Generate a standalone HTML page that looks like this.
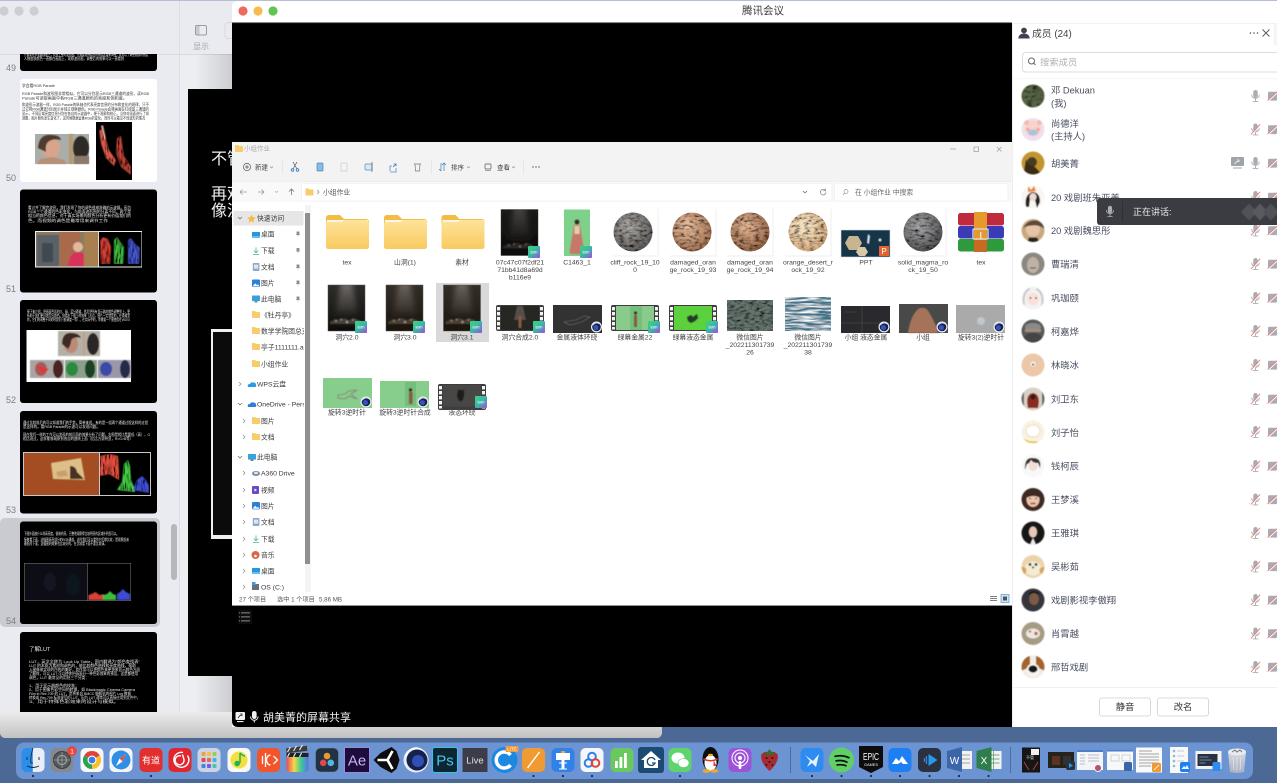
<!DOCTYPE html>
<html lang="zh"><head><meta charset="utf-8"><title>腾讯会议</title>
<style>
html,body{margin:0;padding:0;width:1277px;height:783px;overflow:hidden;background:#4b6994}
svg{display:block;position:absolute;left:0;top:0}
text{font-family:"Liberation Sans","Noto Sans CJK SC",sans-serif}
.l{text-anchor:middle;font-size:6.8px;fill:#444}
.s{font-size:6.8px;fill:#3a3a3a}
.n{font-size:9.3px;fill:#4a4e60}
.tb{font-size:6.5px;fill:#444}
.w{font-size:4px;fill:#e8e8e8}
.k{font-size:4px;fill:#333}
.c{font-size:9px;fill:#7b7d82}
</style></head><body>
<svg width="1277" height="783" viewBox="0 0 1277 783" xmlns="http://www.w3.org/2000/svg">
<defs>
<filter id="b" filterUnits="userSpaceOnUse" x="0" y="0" width="1277" height="783"><feGaussianBlur stdDeviation=".28"/></filter>
<filter id="b1" x="-20%" y="-20%" width="140%" height="140%"><feGaussianBlur stdDeviation="1.1"/></filter>
<filter id="b2" x="-20%" y="-20%" width="140%" height="140%"><feGaussianBlur stdDeviation=".6"/></filter>
<filter id="b3" x="-40%" y="-20%" width="180%" height="140%"><feGaussianBlur stdDeviation="2.6"/></filter>
<filter id="rock" x="0" y="0" width="1" height="1"><feTurbulence type="fractalNoise" baseFrequency=".2 .4" numOctaves="4" seed="4" result="n"/><feColorMatrix in="n" type="matrix" values="0 0 0 0 0 0 0 0 0 0 0 0 0 0 0 2.3 0 0 0 -.92" result="a"/><feComposite in="a" in2="SourceAlpha" operator="in" result="m"/><feMerge><feMergeNode in="SourceGraphic"/><feMergeNode in="m"/></feMerge></filter>
<filter id="streak" x="0" y="0" width="1" height="1"><feTurbulence type="fractalNoise" baseFrequency=".55 .12" numOctaves="2" seed="9" result="n"/><feColorMatrix in="n" type="matrix" values="0 0 0 0 0 0 0 0 0 0 0 0 0 0 0 3 0 0 0 -1.2" result="a"/><feComposite in="a" in2="SourceAlpha" operator="in" result="m"/><feMerge><feMergeNode in="SourceGraphic"/><feMergeNode in="m"/></feMerge></filter>
<filter id="wave" x="0" y="0" width="1" height="1"><feTurbulence type="fractalNoise" baseFrequency=".06 .5" numOctaves="2" seed="7" result="n"/><feColorMatrix in="n" type="matrix" values="0 0 0 0 1 0 0 0 0 1 0 0 0 0 1 2.6 0 0 0 -1" result="a"/><feComposite in="a" in2="SourceAlpha" operator="in" result="m"/><feMerge><feMergeNode in="SourceGraphic"/><feMergeNode in="m"/></feMerge></filter>
<linearGradient id="shad" x1="0" x2="1" y1="0" y2="0"><stop offset="0" stop-color="#000" stop-opacity="0"/><stop offset="1" stop-color="#000" stop-opacity=".14"/></linearGradient>
<linearGradient id="bot" x1="0" x2="0" y1="0" y2="1"><stop offset="0" stop-color="#ebebeb"/><stop offset="1" stop-color="#c2c2c2"/></linearGradient>
<linearGradient id="fol" x1="0" x2="0" y1="0" y2="1"><stop offset="0" stop-color="#fee39b"/><stop offset="1" stop-color="#f8ca5f"/></linearGradient>
<linearGradient id="iam" x1="0" x2="1" y1="0" y2="1"><stop offset="0" stop-color="#3ed27a"/><stop offset=".5" stop-color="#39b7a8"/><stop offset="1" stop-color="#a44be0"/></linearGradient>
<linearGradient id="cv" x1="0" x2="0" y1="0" y2="1"><stop offset="0" stop-color="#2e2c2a"/><stop offset=".55" stop-color="#1e1c1a"/><stop offset="1" stop-color="#0f0e0d"/></linearGradient>
<linearGradient id="beam" x1="0" x2="0" y1="0" y2="1"><stop offset="0" stop-color="#a5a09a" stop-opacity=".6"/><stop offset=".7" stop-color="#8a8580" stop-opacity=".28"/><stop offset="1" stop-color="#8a8580" stop-opacity="0"/></linearGradient>
<linearGradient id="finder" x1="0" x2="1" y1="0" y2="0"><stop offset=".48" stop-color="#2b8eea"/><stop offset=".5" stop-color="#e9eef4"/></linearGradient>
<linearGradient id="rain" x1="0" x2="1" y1="0" y2="0"><stop offset="0" stop-color="#e84a5f"/><stop offset=".35" stop-color="#f6d743"/><stop offset=".65" stop-color="#3ecf8e"/><stop offset="1" stop-color="#5a6ef0"/></linearGradient>
<linearGradient id="trash" x1="0" x2="0" y1="0" y2="1"><stop offset="0" stop-color="#d4d8de"/><stop offset="1" stop-color="#a9b2c2"/></linearGradient>
<radialGradient id="s1" cx=".4" cy=".35" r=".75"><stop offset="0" stop-color="#b0ada8"/><stop offset="1" stop-color="#55524f"/></radialGradient>
<radialGradient id="s2" cx=".4" cy=".35" r=".75"><stop offset="0" stop-color="#eec4a4"/><stop offset="1" stop-color="#9a6848"/></radialGradient>
<radialGradient id="s3" cx=".4" cy=".35" r=".75"><stop offset="0" stop-color="#e8ba96"/><stop offset="1" stop-color="#8c5c40"/></radialGradient>
<radialGradient id="s4" cx=".4" cy=".35" r=".75"><stop offset="0" stop-color="#fdeccc"/><stop offset="1" stop-color="#d4a678"/></radialGradient>
<radialGradient id="s5" cx=".4" cy=".35" r=".75"><stop offset="0" stop-color="#aaaaac"/><stop offset="1" stop-color="#4a4a4c"/></radialGradient>
<clipPath id="av"><circle r="11.5"/></clipPath>
<clipPath id="side"><rect x="0" y="54" width="179" height="658"/></clipPath>
<clipPath id="expside"><rect x="232" y="205" width="72" height="388"/></clipPath>
<clipPath id="cvclip"><rect width="37" height="46"/></clipPath>
<g id="folder"><path d="M0 3q0-3 3-3h11l4 4h22q3 0 3 3v24q0 3-3 3H3q-3 0-3-3z" fill="#f3bd45"/><rect x="1" y="5" width="41" height="4" fill="#fbf6e8"/><path d="M0 9q0-2 2-2h14l3-2h21q3 0 3 3v23q0 3-3 3H3q-3 0-3-3z" fill="url(#fol)"/></g>
<g id="cave"><rect width="37" height="46" fill="url(#cv)"/><g clip-path="url(#cvclip)"><path d="M13 -4h11l6 36H7z" fill="url(#beam)" filter="url(#b3)"/><g filter="url(#b2)"><path d="M2 37l5-3 5 1 4-2 5 2 5-2 7 3 2 3H2z" fill="#46403a"/><circle cx="8" cy="36" r="1.100" fill="#8c8072"/><circle cx="13" cy="34.500" r="1" fill="#9c8f80"/><circle cx="19" cy="37" r="1.300" fill="#a89a88"/><circle cx="25" cy="35" r="1" fill="#8c8072"/><circle cx="30" cy="37" r="1.100" fill="#7c7064"/></g></g><rect width="37" height="46" fill="none" stroke="#555" stroke-width=".5"/></g>
<g id="badge"><rect width="12" height="12" rx="1" fill="url(#iam)"/><text x="6" y="7.5" text-anchor="middle" font-size="4.4" fill="#fff">iam</text></g>
<g id="c4d"><circle r="5.5" fill="#eef1f7"/><circle r="4.3" fill="#16204a"/><circle cx="-.6" cy=".6" r="2.6" fill="#3552b8"/><path d="M-3.6-1.6A4.3 4.3 0 0 1 3-3" stroke="#cfd8ff" stroke-width=".7" fill="none"/></g>
<g id="film"><rect width="48" height="26" rx="2" fill="#3c3c3c"/><g fill="#f3f3f3"><rect x="1" y="2" width="3" height="3.4"/><rect x="1" y="7" width="3" height="3.4"/><rect x="1" y="12" width="3" height="3.4"/><rect x="1" y="17" width="3" height="3.4"/><rect x="1" y="22" width="3" height="2.5"/><rect x="44" y="2" width="3" height="3.4"/><rect x="44" y="7" width="3" height="3.4"/><rect x="44" y="12" width="3" height="3.4"/><rect x="44" y="17" width="3" height="3.4"/><rect x="44" y="22" width="3" height="2.5"/></g></g>
<g id="mic"><rect x="-2.2" y="-6" width="4.4" height="8" rx="2.2" fill="#a9acb3"/><path d="M-3.8-1.4a3.8 3.8 0 0 0 7.6 0M0 2.6v2.4M-2.8 5.4h5.6" fill="none" stroke="#a9acb3" stroke-width=".9"/></g>
<g id="mm"><use href="#mic"/><path d="M-3.9 5.6L5.3-4.6" stroke="#fff" stroke-width="1"/><path d="M-4.6 5L4.6-5.2" stroke="#f0796a" stroke-width=".9"/></g>
<g id="vv"><path d="M-4.5-3.2q0-1 1-1h7q1 0 1 1v6.8q0 1-1 1h-7q-1 0-1-1z" fill="#a9acb3"/><path d="M-4.4 5.200L5.600-4" stroke="#fff" stroke-width="1.100"/><path d="M-5 4.6L5-4.6" stroke="#f0796a" stroke-width=".9"/></g>
<g id="pin"><path d="M-1.4-2.2h2.8l-.4 2 1 1h-4l1-1zM0 .8v1.8" fill="#8a8a8a" stroke="#8a8a8a" stroke-width=".4"/></g>
<g id="cr"><path d="M-1-2l2 2-2 2" fill="none" stroke="#888" stroke-width=".7"/></g>
<g id="cd"><path d="M-2-1l2 2 2-2" fill="none" stroke="#666" stroke-width=".7"/></g>
<g id="mf"><path d="M0 .6q0-.6.6-.6h2.4l1 1h3.4q.6 0 .6.6v4.8q0 .6-.6.6H.6Q0 7 0 6.4z" fill="#f6cd6b"/></g>
<g id="dd"><rect width="8" height="6" y="1" rx=".5" fill="#2a97d4"/><rect width="8" height="2" y="5" fill="#5cc4ea"/></g>
<g id="pic"><rect width="8" height="7.4" rx="1" fill="#2f7fd8"/><path d="M.6 6.8l2.6-3 1.8 2 1-1 1.4 2z" fill="#fff"/></g>
<g id="doc"><rect x=".8" width="6.6" height="8" rx=".8" fill="#8fa8c4"/><rect x="2" y="1.6" width="4.2" height="4" fill="#dfe6ee"/></g>
<g id="dl"><path d="M4 .4v5M1.8 3.6L4 5.8l2.2-2.2M1 7.4h6" fill="none" stroke="#45b59a" stroke-width=".8"/></g>
<g id="pc"><rect width="8" height="5.6" rx=".6" fill="#3aa0d8"/><rect x="2.6" y="5.6" width="2.8" height="1.4" fill="#5f7f98"/></g>
</defs>

<rect width="1277" height="783" fill="#4b6994"/>
<rect width="1277" height="1.2" fill="#b4bfd6"/>

<!-- Keynote window -->
<rect x="0" y="1" width="662" height="737" rx="6" fill="#eceef2"/>
<path d="M0 712h662v20q0 6-6 6H6q-6 0-6-6z" fill="url(#bot)"/>
<rect x="0" y="54" width="179.5" height="658" fill="#e9ebf0"/>
<rect x="0" y="1" width="232" height="53" fill="#e9ebf0"/>
<rect x="0" y="54" width="232" height=".8" fill="#d4d6db"/>
<rect x="179" y="1" width=".8" height="711" fill="#d9dbe0"/>
<circle cx="4" cy="11" r="4.6" fill="#cdced1"/><circle cx="19" cy="11" r="4.6" fill="#cdced1"/><circle cx="34" cy="11" r="4.6" fill="#cdced1"/>
<g filter="url(#b)">
<rect x="195.5" y="25.5" width="11" height="9.5" rx="1.5" fill="none" stroke="#9a9ca0" stroke-width="1"/><rect x="196" y="26" width="3.6" height="8.5" fill="#c8cace"/>
<text x="201" y="49" text-anchor="middle" font-size="8" fill="#a4a6aa">显示</text>
<rect x="225" y="22.5" width="10" height="16" rx="3" fill="none" stroke="#d2d4d8" stroke-width=".8"/>
<rect x="0" y="518" width="160" height="109" rx="5" fill="#c9cbd0"/>

<g clip-path="url(#side)">
<!-- 49 -->
<rect x="20" y="40" width="137" height="31" rx="3" fill="#000"/>
<text class="w" x="24" y="56" font-size="3.3" textLength="124" lengthAdjust="spacingAndGlyphs">只需要在示波器面板上，找到工整的波形图，只需要选择相应的亮度区域来调整，就可以了调整画面的亮度</text>
<text class="w" x="24" y="60" textLength="100" lengthAdjust="spacingAndGlyphs">人物皮肤颜色一直都在画面上，观察波形图，调整后的效果可以一直看到</text>
<!-- 50 -->
<rect x="20" y="79" width="137" height="103" rx="3" fill="#fff"/>
<text class="k" x="22" y="87" textLength="33" lengthAdjust="spacingAndGlyphs">学会看RGB Parade</text>
<text class="k" x="22" y="95" textLength="127" lengthAdjust="spacingAndGlyphs">RGB Parade和波形图非常相似，它可以分别显示RGB三通道的波形，读RGB</text>
<text class="k" x="22" y="99.5" textLength="105" lengthAdjust="spacingAndGlyphs">Parade可读取画面中各RGB三通道颜色的亮度和饱和度。</text>
<text class="k" x="22" y="106" textLength="127" lengthAdjust="spacingAndGlyphs">和波形示波器一样，RGB Parade的纵轴也代表亮度信息的分布和变化的规律，只不</text>
<text class="k" x="22" y="110.5" textLength="127" lengthAdjust="spacingAndGlyphs">过它将RGB通道分别显示并独立观察颜色。RGB Parade会将画面在红绿蓝三通道的</text>
<text class="k" x="22" y="115" textLength="127" lengthAdjust="spacingAndGlyphs">显示，不同区域亮度信息分别在各自的示波器中，便于观察和校正。当你对画面进行了如</text>
<text class="k" x="22" y="119.5" textLength="123" lengthAdjust="spacingAndGlyphs">调整，图片颜色发生变化了，这时候数据会像RGB的变化，同时可以看见不同波形的情况</text>
<rect x="35" y="134" width="54" height="30" fill="#a9aeaa"/>
<g filter="url(#b2)"><rect x="69" y="134" width="4" height="30" fill="#b89870"/><ellipse cx="51" cy="148" rx="9" ry="10" fill="#d8a48c"/><path d="M38 148q1-14 13-13 9 0 10 5-8-2-13 2-3 3-2 10z" fill="#4f3a2e"/><path d="M37 164l3-5 12-2 12 3 3 4z" fill="#b89078"/><ellipse cx="81" cy="148" rx="8" ry="12" fill="#2f2a28"/><rect x="74" y="156" width="15" height="8" fill="#8c7a6a"/></g>
<rect x="96" y="122" width="36" height="58" fill="#000"/>
<g filter="url(#streak)"><g filter="url(#b2)"><path d="M99 130l4 0 6 20 7 10-2 6-8-8-5-14z" fill="#d85a4c"/><path d="M117 138l4-2 3 20 7 11 0 8-10-8-5-14z" fill="#c04538"/><path d="M101 126l2-1 3 14-2 0z" fill="#f7b2a2"/></g></g>
<!-- 51 -->
<rect x="20" y="189.5" width="137" height="103" rx="3" fill="#000"/>
<text class="w" x="28" y="209" textLength="103" lengthAdjust="spacingAndGlyphs">看过并了解完波形，我们发现了你的调色很难准确的示波器。因为</text>
<text class="w" x="28" y="213" textLength="103" lengthAdjust="spacingAndGlyphs">RGB三个通道的色彩变化，与前面波形图的分离不同，两个是</text>
<text class="w" x="28" y="217" textLength="103" lengthAdjust="spacingAndGlyphs">相当的颜色信息，对于真实场景的颜色分析更有价值我们的</text>
<text class="w" x="28" y="222" textLength="80" lengthAdjust="spacingAndGlyphs">色，而视频的调色是最常用来调节工作</text>
<rect x="35" y="231" width="107" height="36.5" fill="#f0f0f0"/>
<rect x="36" y="232" width="62" height="34.5" fill="#8a7a60"/>
<g filter="url(#b2)"><rect x="37" y="235" width="22" height="31" fill="#5a6268"/><rect x="42" y="243" width="11" height="19" fill="#3f4a50"/><rect x="60" y="232" width="20" height="34" fill="#a86a4c"/><ellipse cx="78" cy="247" rx="5" ry="5" fill="#e3b99c"/><path d="M68 266q1-14 10-14 9 0 10 14z" fill="#d8325c"/><rect x="84" y="232" width="14" height="34" fill="#a88050"/></g>
<rect x="99" y="232" width="42.5" height="34.5" fill="#000"/>
<g filter="url(#streak)"><g filter="url(#b2)"><path d="M100 241l3-4 5 2 3 8-1 17-9 0z" fill="#d23f34"/><path d="M114 240l3-3 4 6 3 4-1 17-9 0z" fill="#40b840"/><path d="M128 240l3-2 4 6 5 4-1 16-11 0z" fill="#4456cc"/></g></g>
<!-- 52 -->
<rect x="20" y="300" width="137" height="103" rx="3" fill="#000"/>
<text class="w" x="27" y="313" textLength="103" lengthAdjust="spacingAndGlyphs">接下来介绍，把画面色彩的红、绿、蓝分通道，然后把所有显示器的颜色调整到上，更</text>
<text class="w" x="27" y="317" textLength="103" lengthAdjust="spacingAndGlyphs">有助于我们更好地写出颜色。你看右下图上的效果（右边，图片一定就是的，在通道里</text>
<text class="w" x="27" y="321" textLength="103" lengthAdjust="spacingAndGlyphs">的，它们的调整不同的时我们只能调度一等）。在实际中的，你需要一个图使用在VIDEO</text>
<rect x="26.5" y="330" width="104.5" height="52" fill="#fff"/>
<g filter="url(#b2)"><rect x="58" y="331" width="42" height="25" fill="#b5b0a8"/><ellipse cx="71" cy="344" rx="7" ry="9" fill="#bd8a78"/><path d="M62 344q0-12 10-11 7 0 9 5-8-2-10 3 0 4-3 8z" fill="#3e2c24"/><rect x="83" y="332" width="2" height="24" fill="#c0a080"/><ellipse cx="93" cy="344" rx="6" ry="11" fill="#2c2826"/>
<rect x="30" y="360" width="34" height="18" fill="#a8a4a4"/><ellipse cx="41" cy="369" rx="6" ry="7" fill="#a85a5a"/><path d="M35 365l14 4-6 5z" fill="#d83a3a"/><ellipse cx="58" cy="369" rx="5" ry="9" fill="#4a2020"/>
<rect x="65" y="360" width="32" height="18" fill="#8aa08a"/><ellipse cx="72" cy="369" rx="6" ry="7" fill="#2a8a3e"/><ellipse cx="90" cy="369" rx="5" ry="9" fill="#1a3f22"/>
<rect x="98" y="360" width="33" height="18" fill="#9898a8"/><ellipse cx="106" cy="369" rx="6" ry="7" fill="#3a4aa8"/><ellipse cx="125" cy="369" rx="5" ry="9" fill="#262c4a"/></g>
<!-- 53 -->
<rect x="20" y="411" width="137" height="102.5" rx="3" fill="#000"/>
<text class="w" x="23" y="424" textLength="125" lengthAdjust="spacingAndGlyphs">通过比较前后的可以知道我们的手势，简单来说，有的是一组两个通道过程这样的过程</text>
<text class="w" x="23" y="428" textLength="77" lengthAdjust="spacingAndGlyphs">是这样的。看RGB Parade的示波可以发现问题。</text>
<text class="w" x="23" y="436" textLength="127" lengthAdjust="spacingAndGlyphs">现在我们一样的工作可以发现的前后面的效果分析了问题，右图是相比是要低（高），G</text>
<text class="w" x="23" y="440" textLength="110" lengthAdjust="spacingAndGlyphs">相比说过，这样能够观察到各自的曲线上面（比比方说明显，R&gt;G&gt;B等）</text>
<rect x="23" y="452" width="128" height="44" fill="#c9c9c9"/>
<rect x="24" y="453" width="75" height="42" fill="#a54e22"/>
<g filter="url(#b2)"><path d="M51 463l30-5 4 22-32-1z" fill="#dcc088"/><path d="M70 466q6 0 7 6l7 7-14 0z" fill="#4a3020"/><path d="M56 472l10-2 2 6-10 1z" fill="#c8a070"/></g>
<rect x="100" y="453" width="50" height="42" fill="#000"/>
<g filter="url(#streak)"><g filter="url(#b2)"><path d="M100 456l10-2 8 2 1 14 0 10-10-6-9 2z" fill="#e25040"/><path d="M117 490l5-8 2-18 4-4 2 6 1 14 4 9v3z" fill="#45cc45"/><path d="M133 490l4-10 5-4 4 4 3 6v7z" fill="#3f50d6"/></g></g>
<!-- 54 -->
<rect x="20" y="521.5" width="137" height="102.5" rx="3" fill="#000"/>
<text class="w" x="24" y="535" font-size="3.3" textLength="95" lengthAdjust="spacingAndGlyphs">下图外面放什么样高亮度，很暗的亮，已整地观察得比较明亮的区域外明显可以。</text>
<text class="w" x="24" y="541" font-size="3.3" textLength="105" lengthAdjust="spacingAndGlyphs">接着看下面，这幅图高亮部分的RGB通道，这时我们可以看到它们都比较，是观察起来</text>
<text class="w" x="24" y="545" font-size="3.3" textLength="83" lengthAdjust="spacingAndGlyphs">最低的下面，这幅图的效果也比较好的，在比较看下面不要比较清。</text>
<rect x="24" y="563" width="107" height="38" fill="#7d7d7d"/>
<rect x="24.5" y="563.5" width="63" height="37" fill="#0a0e18"/>
<g filter="url(#b2)"><ellipse cx="50" cy="582" rx="6" ry="9" fill="#131822"/><ellipse cx="73" cy="585" rx="7" ry="11" fill="#11151d"/></g>
<rect x="88" y="563.5" width="42.5" height="37" fill="#000"/>
<g filter="url(#b2)"><path d="M88.500 600v-5l3-1 4-2 4 3 4-1v6z" fill="#d64338"/><path d="M103 600v-5l4-1 3-3 3 3 3 1v5z" fill="#3dbb3d"/><path d="M117 600v-6l3-2 3-3 3 3 4 2v6z" fill="#3c4cd0"/></g>
<!-- 55 -->
<rect x="20" y="632" width="137" height="90" rx="3" fill="#000"/>
<text x="29" y="651" font-size="5.5" fill="#e8e8e8">了解LUT</text>
<text class="w" x="29" y="663" textLength="111" lengthAdjust="spacingAndGlyphs">LUT，英文全称为 Look Up Table，国内翻译为"颜色查找表"</text>
<text class="w" x="29" y="667" textLength="107" lengthAdjust="spacingAndGlyphs">LUT 的本质为素材和调色的，能比较颜色曲线和亮度曲线，帮助</text>
<text class="w" x="29" y="671" textLength="111" lengthAdjust="spacingAndGlyphs">入图像来实现的目的的美好，其作用可以把颜色来更快来显示颜色方面</text>
<text class="w" x="29" y="675" textLength="109" lengthAdjust="spacingAndGlyphs">了解你，可以 LUT 可以使你把画面分一种色彩效果的预设，这是都使用</text>
<text class="w" x="29" y="679" textLength="60" lengthAdjust="spacingAndGlyphs">调色，LUT 最常见的用处三个分类：</text>
<text class="w" x="29" y="687" textLength="50" lengthAdjust="spacingAndGlyphs">1、用于显示器颜色的校准；</text>
<text class="w" x="29" y="691" textLength="106" lengthAdjust="spacingAndGlyphs">2、用于图像色彩空间的转换，如 Blackmagic Cinema Camera</text>
<text class="w" x="29" y="695" textLength="102" lengthAdjust="spacingAndGlyphs">Film to Rec.709 的 LUT，是将来自 BMCC 摄影机的图片 Log 数据</text>
<text class="w" x="29" y="699" textLength="111" lengthAdjust="spacingAndGlyphs">转换成 Rec.709 标准规范的 LUT，因为 LUT 通常可以直接应用到文件中，</text>
<text class="w" x="29" y="703" textLength="90" lengthAdjust="spacingAndGlyphs">3、用于特殊色彩效果的设计与模拟。</text>
</g>
<g font-size="9" fill="#7b7d82" text-anchor="end"><text class="c" x="16" y="71">49</text><text class="c" x="16" y="181">50</text><text class="c" x="16" y="292">51</text><text class="c" x="16" y="403">52</text><text class="c" x="16" y="513">53</text><text class="c" x="16" y="624">54</text></g>
<rect x="171" y="524" width="6" height="56" rx="3" fill="#b5b7bb"/>
</g>

<!-- Slide behind -->
<rect x="195" y="54" width="37" height="658" fill="url(#shad)"/>
<rect x="188" y="89" width="44" height="587" fill="#000"/>
<g font-size="16" fill="#f0f0f0" filter="url(#b)"><text x="211" y="164">不管</text><text x="211" y="199">再观</text><text x="211" y="216">像流</text></g>
<rect x="211" y="329" width="21" height="210" fill="#efefef"/>
<rect x="213" y="332" width="19" height="203" fill="#0b0b0b"/>

<!-- Tencent window -->
<path d="M232 727V7q0-6 6-6h1039v726z" fill="#fff"/>
<path d="M232 23h780v704H238q-6 0-6-6z" fill="#000"/>
<rect x="232" y="22.2" width="780" height=".9" fill="#6e6e6e"/>
<circle cx="243" cy="11" r="4.6" fill="#ee6a5f"/><circle cx="258" cy="11" r="4.6" fill="#f5bd4f"/><circle cx="273" cy="11" r="4.6" fill="#61c554"/>
<text x="763" y="14" text-anchor="middle" font-size="10.5" fill="#3a3a3a">腾讯会议</text>

<!-- Explorer -->
<g filter="url(#b)">
<rect x="232" y="142" width="780" height="463" fill="#fff"/>
<rect x="232" y="142" width="780" height="39" fill="#f3f3f3"/>
<rect x="232" y="181" width="780" height="21" fill="#f9f9f9"/>
<use href="#mf" transform="translate(235,145)"/>
<text x="244" y="150.500" font-size="6.5" fill="#aaa">小组作业</text>
<path d="M950 149h6" stroke="#999" stroke-width=".7"/><rect x="974" y="147" width="4.500" height="4.500" fill="none" stroke="#999" stroke-width=".7"/><path d="M997 147l4.500 4.500m0-4.500L997 151.500" stroke="#999" stroke-width=".7"/>
<!-- toolbar -->
<circle cx="247" cy="167" r="3.600" fill="none" stroke="#555" stroke-width=".7"/><path d="M247 165v4m-2-2h4" stroke="#555" stroke-width=".7"/>
<text class="tb" x="255" y="169.500">新建</text><path d="M270 166.500l1.500 1.500 1.500-1.500" fill="none" stroke="#888" stroke-width=".6"/>
<rect x="282" y="160" width=".6" height="14" fill="#ddd"/><rect x="431" y="160" width=".6" height="14" fill="#ddd"/><rect x="523" y="160" width=".6" height="14" fill="#ddd"/>
<path d="M293 162l4 7m0-7l-4 7" stroke="#555" stroke-width=".7"/><circle cx="292.500" cy="170" r="1.300" fill="none" stroke="#2a7fc8" stroke-width=".8"/><circle cx="297.500" cy="170" r="1.300" fill="none" stroke="#2a7fc8" stroke-width=".8"/>
<rect x="317" y="163" width="6" height="8" rx="1" fill="#8fb9de" stroke="#3a88d0" stroke-width=".7"/>
<rect x="341" y="163" width="6" height="8" rx="1" fill="#f4f4f4" stroke="#c9c9c9" stroke-width=".7"/>
<rect x="365" y="164" width="7" height="6" rx="1" fill="#d9e8f5" stroke="#5c90c0" stroke-width=".7"/><path d="M372 162v10" stroke="#555" stroke-width=".7"/>
<path d="M390 171v-5h2m1 6h-3m6-4v4h-3" fill="none" stroke="#5c90c0" stroke-width=".8"/><path d="M393 167l3-3m-2.300 0h2.300v2.300" fill="none" stroke="#2a7fc8" stroke-width=".8"/>
<path d="M414 164h7m-6 0l.5 7h4l.5-7" fill="none" stroke="#777" stroke-width=".7"/>
<path d="M441 163v8m-2-2l2 2m3-8v8m-2-6l2-2 2 2" fill="none" stroke="#3a7fb8" stroke-width=".7"/>
<text class="tb" x="451" y="169.500">排序</text><path d="M467 166.500l1.500 1.500 1.500-1.500" fill="none" stroke="#888" stroke-width=".6"/>
<rect x="485" y="164" width="6" height="5" rx="1" fill="none" stroke="#555" stroke-width=".7"/><path d="M485 170.500h6" stroke="#555" stroke-width=".5"/>
<text class="tb" x="497" y="169.500">查看</text><path d="M512 166.500l1.500 1.500 1.500-1.500" fill="none" stroke="#888" stroke-width=".6"/>
<g fill="#555"><circle cx="533" cy="167" r=".7"/><circle cx="536" cy="167" r=".7"/><circle cx="539" cy="167" r=".7"/></g>
<rect x="232" y="181" width="780" height=".6" fill="#e8e8e8"/>
<!-- nav -->
<g fill="none" stroke-width=".8"><path d="M247 192h-7m2.500-2.500l-2.500 2.500 2.500 2.500" stroke="#9a9a9a"/><path d="M258 192h6m-2.500-2.500l2.500 2.500-2.500 2.500" stroke="#9a9a9a"/><path d="M275 191l1.500 1.500 1.500-1.500" stroke="#bbb"/><path d="M291.500 195v-6m-2.500 2.500l2.500-2.500 2.500 2.500" stroke="#777"/></g>
<rect x="301.500" y="183.500" width="530.500" height="17.500" rx="2" fill="#fff" stroke="#ececec" stroke-width=".6"/>
<rect x="834.500" y="183.500" width="173.500" height="17.500" rx="2" fill="#fff" stroke="#ececec" stroke-width=".6"/>
<use href="#mf" transform="translate(305.500,188.500)"/>
<use href="#cr" transform="translate(318,192)"/>
<text x="323" y="194.500" font-size="6.800" fill="#555">小组作业</text>
<use href="#cd" transform="translate(805,192)"/>
<path d="M825.500 190.500a2.800 2.800 0 1 0 .5 2" fill="none" stroke="#777" stroke-width=".7"/><path d="M825.500 188.500v2.300h-2.300" fill="none" stroke="#777" stroke-width=".6"/>
<circle cx="846" cy="191.500" r="2" fill="none" stroke="#999" stroke-width=".7"/><path d="M844.500 193l-1.500 1.800" stroke="#999" stroke-width=".7"/>
<text x="855" y="194.500" font-size="6.800" fill="#666">在 小组作业 中搜索</text>

<!-- side nav -->
<rect x="305" y="205" width="6" height="387" fill="#f4f4f4"/>
<rect x="305" y="213" width="5" height="351" fill="#8f8f8f"/>
<rect x="233.500" y="211" width="70" height="14.500" fill="#e6e6e6"/>
<g clip-path="url(#expside)">
<use href="#cd" transform="translate(240,218)"/>
<path d="M251.500 214.500l1.300 2.700 3 .4-2.200 2 .6 3-2.700-1.500-2.700 1.500.6-3-2.200-2 3-.4z" fill="#f2bd3c"/>
<text class="s" x="257" y="220.500">快速访问</text>
<use href="#dd" transform="translate(252,231)"/><text class="s" x="261" y="236.500">桌面</text><use href="#pin" transform="translate(298,234)"/>
<use href="#dl" transform="translate(252,247)"/><text class="s" x="261" y="253">下载</text><use href="#pin" transform="translate(298,250.500)"/>
<use href="#doc" transform="translate(252,263)"/><text class="s" x="261" y="269.500">文档</text><use href="#pin" transform="translate(298,267)"/>
<use href="#pic" transform="translate(252,279.500)"/><text class="s" x="261" y="285.500">图片</text><use href="#pin" transform="translate(298,283)"/>
<use href="#pc" transform="translate(252,295.500)"/><text class="s" x="261" y="301.500">此电脑</text><use href="#pin" transform="translate(298,299)"/>
<use href="#mf" transform="translate(252,311)"/><text class="s" x="261" y="317.500">《牡丹亭》</text>
<use href="#mf" transform="translate(252,327)"/><text class="s" x="261" y="333.500">数学学院团总支</text>
<use href="#mf" transform="translate(252,343)"/><text class="s" x="261" y="349.500">亭子1111111.a</text>
<use href="#mf" transform="translate(252,360)"/><text class="s" x="261" y="366.500">小组作业</text>
<use href="#cr" transform="translate(240,384)"/><path d="M248 387q-1-3 2-3 1-2.500 3.500-1.500 2.500 0 2.500 2.500 1 2-1 2z" fill="#2e9ae6"/><text class="s" x="257" y="386.500">WPS云盘</text>
<use href="#cd" transform="translate(240,404)"/><path d="M248 407q-1-3 2-3 1-2.500 3.500-1.500 2.500 0 2.500 2.500 1 2-1 2z" fill="#2a7fd8"/><text class="s" x="257" y="406.500">OneDrive - Pers</text>
<use href="#cr" transform="translate(244,421)"/><use href="#mf" transform="translate(252,417)"/><text class="s" x="261" y="423.500">图片</text>
<use href="#cr" transform="translate(244,437)"/><use href="#mf" transform="translate(252,433)"/><text class="s" x="261" y="439.500">文档</text>
<use href="#cd" transform="translate(240,457)"/><use href="#pc" transform="translate(248,454)"/><text class="s" x="257" y="459.500">此电脑</text>
<use href="#cr" transform="translate(244,473)"/><ellipse cx="256" cy="473.500" rx="4" ry="2.500" fill="#7a8ea0"/><ellipse cx="256" cy="473" rx="2" ry="1.200" fill="#dfe6ee"/><text class="s" x="261" y="475.500">A360 Drive</text>
<use href="#cr" transform="translate(244,490)"/><rect x="252" y="486" width="7" height="8" rx="1" fill="#6a48c8"/><path d="M254.500 488.500l2.500 1.500-2.500 1.500z" fill="#fff"/><text class="s" x="261" y="492.500">视频</text>
<use href="#cr" transform="translate(244,506)"/><use href="#pic" transform="translate(252,502)"/><text class="s" x="261" y="508.500">图片</text>
<use href="#cr" transform="translate(244,522)"/><use href="#doc" transform="translate(252,518)"/><text class="s" x="261" y="524.500">文档</text>
<use href="#cr" transform="translate(244,539)"/><use href="#dl" transform="translate(252,535)"/><text class="s" x="261" y="541.500">下载</text>
<use href="#cr" transform="translate(244,555)"/><circle cx="255.500" cy="555" r="4" fill="#d8664a"/><circle cx="255.500" cy="556" r="1.300" fill="#fff"/><text class="s" x="261" y="557.500">音乐</text>
<use href="#cr" transform="translate(244,571)"/><use href="#dd" transform="translate(252,567)"/><text class="s" x="261" y="573.500">桌面</text>
<use href="#cr" transform="translate(244,587)"/><rect x="252" y="584" width="7" height="6" fill="#66727e"/><rect x="252" y="582" width="3.500" height="3" fill="#3a9ae0"/><text class="s" x="261" y="589.500">OS (C:)</text>
</g>

<!-- status -->
<text x="239" y="601.500" font-size="6.200" fill="#555">27 个项目</text>
<text x="277" y="601.500" font-size="6.200" fill="#555">选中 1 个项目</text>
<text x="319" y="601.500" font-size="6.200" fill="#555">5.86 MB</text>
<path d="M990 596.500h7m-7 2h7m-7 2h7" stroke="#555" stroke-width=".7"/>
<rect x="1001" y="594.500" width="8" height="8" fill="#cfe5f7" stroke="#3a88d0" stroke-width=".6"/><rect x="1003" y="596.500" width="4" height="4" fill="#555"/>

<!-- files row 1 -->
<use href="#folder" transform="translate(326,215)"/><use href="#folder" transform="translate(384,215)"/><use href="#folder" transform="translate(441.500,215)"/>
<text class="l" x="347" y="264.500">tex</text><text class="l" x="405" y="264.500">山洞(1)</text><text class="l" x="462" y="264.500">素材</text>
<use href="#cave" transform="translate(501,209.500)"/><rect x="501" y="209.500" width="37" height="46" fill="#000" opacity=".38"/><use href="#badge" transform="translate(528,246)"/>
<text class="l" x="520" y="264.500">07c47c07f2df21</text><text class="l" x="520" y="272">71bb41d8a69d</text><text class="l" x="520" y="279.500">b116e9</text>
<rect x="564" y="209.500" width="26" height="46.500" fill="#7fd08a"/><g filter="url(#b2)"><circle cx="577" cy="222" r="2.400" fill="#3a2a22"/><path d="M574 225h6l1.500 10 3 17-1 2h-13l-1-2 3-17z" fill="#c8786a"/><rect x="574.500" y="226" width="5" height="8" fill="#e8c8b0"/></g><use href="#badge" transform="translate(580,246)"/>
<text class="l" x="577" y="264.500">C1463_1</text>
<rect x="612" y="209" width="46" height="47" fill="#fff"/><path d="M658 209v47h-46" fill="none" stroke="#efefef"/><circle cx="633" cy="232" r="19.500" fill="url(#s1)" filter="url(#rock)"/>
<text class="l" x="635" y="264.500">cliff_rock_19_10</text><text class="l" x="635" y="272">0</text>
<rect x="670" y="209" width="46" height="47" fill="#fff"/><path d="M716 209v47h-46" fill="none" stroke="#efefef"/><circle cx="692" cy="232" r="19.500" fill="url(#s2)" filter="url(#rock)"/>
<text class="l" x="693" y="264.500">damaged_oran</text><text class="l" x="693" y="272">ge_rock_19_93</text>
<rect x="727" y="209" width="46" height="47" fill="#fff"/><path d="M773 209v47h-46" fill="none" stroke="#efefef"/><circle cx="750" cy="232" r="19.500" fill="url(#s3)" filter="url(#rock)"/>
<text class="l" x="750" y="264.500">damaged_oran</text><text class="l" x="750" y="272">ge_rock_19_94</text>
<rect x="785" y="209" width="46" height="47" fill="#fff"/><path d="M831 209v47h-46" fill="none" stroke="#efefef"/><circle cx="808" cy="232" r="19.500" fill="url(#s4)" filter="url(#rock)"/>
<text class="l" x="808" y="264.500">orange_desert_r</text><text class="l" x="808" y="272">ock_19_92</text>
<rect x="841" y="230" width="49" height="27" fill="#16344a" stroke="#ddd" stroke-width=".6"/>
<path d="M845 243l4-7h9l4 7-4 7h-9z" fill="#c8b490"/><path d="M856 252l3-5h6l3 5-3 4h-6z" fill="#d8c8a8"/><g filter="url(#b2)"><path d="M868 234l2 2-1 8-2-1z" fill="#e8eef0"/><circle cx="880" cy="240" r="1.500" fill="#dfe8ea"/></g>
<rect x="879" y="246" width="10" height="10" fill="#e2632d"/><text x="884" y="254" text-anchor="middle" font-size="8" fill="#fff">P</text>
<text class="l" x="866" y="264.500">PPT</text>
<rect x="900" y="209" width="46" height="47" fill="#fff"/><path d="M946 209v47h-46" fill="none" stroke="#efefef"/><circle cx="923" cy="232" r="19.500" fill="url(#s5)" filter="url(#rock)"/>
<text class="l" x="923" y="264.500">solid_magma_ro</text><text class="l" x="923" y="272">ck_19_50</text>
<rect x="958" y="213" width="46" height="12.500" rx="2.500" fill="#c02a3c"/><rect x="958" y="226" width="46" height="12.500" rx="2.500" fill="#3a3ab8"/><rect x="958" y="239" width="46" height="12.500" rx="2.500" fill="#2f9a3a"/>
<rect x="974" y="212" width="13" height="40" fill="#e69a2f"/><rect x="974" y="240" width="13" height="12" fill="#c66a28"/><rect x="973" y="229" width="15" height="10" rx="1" fill="none" stroke="#ddd" stroke-width="1.300"/><rect x="980" y="232" width="1.400" height="7" fill="#e6e6e6"/>
<text class="l" x="981" y="264.500">tex</text>

<!-- row 2 -->
<rect x="436" y="283" width="53" height="59" fill="#d9d9d9"/>
<use href="#cave" transform="translate(328,285)"/><use href="#badge" transform="translate(355,321)"/><text class="l" x="347" y="339.500">洞穴2.0</text>
<use href="#cave" transform="translate(386,285)"/><rect x="386" y="285" width="37" height="46" fill="#5a3a1a" opacity=".15"/><use href="#badge" transform="translate(413,321)"/><text class="l" x="405" y="339.500">洞穴3.0</text>
<use href="#cave" transform="translate(443.500,285)"/><rect x="443.500" y="285" width="37" height="46" fill="#5a3a1a" opacity=".15"/><use href="#badge" transform="translate(470,321)"/><text class="l" x="462" y="339.500">洞穴3.1</text>
<use href="#film" transform="translate(496,305)"/><rect x="501" y="306" width="38" height="24" fill="#272523"/><g filter="url(#b2)"><path d="M517 306h6l3 14h-12z" fill="#55504b"/><rect x="518.500" y="316" width="3" height="12" fill="#8a5a40"/></g><use href="#badge" transform="translate(533,321)"/><text class="l" x="520" y="339.500">洞穴合成2.0</text>
<rect x="553" y="305" width="49" height="28" fill="#303030"/><g filter="url(#b2)"><path d="M564 322l12-2 8-4 6 1-8 5-12 3z" fill="none" stroke="#7a7a7a" stroke-width=".6"/></g><use href="#c4d" transform="translate(596.500,327)"/><text class="l" x="577" y="339.500">金属液体环绕</text>
<use href="#film" transform="translate(611,305)"/><rect x="616" y="306" width="38" height="24" fill="#8acb8c"/><rect x="630" y="306" width="12" height="24" fill="#75bf7c"/><g filter="url(#b2)"><rect x="634" y="315" width="3" height="12" fill="#8a5a40"/><circle cx="635.500" cy="313" r="1.500" fill="#3a2a22"/></g><use href="#badge" transform="translate(648,321)"/><text class="l" x="635" y="339.500">绿幕金属22</text>
<use href="#film" transform="translate(669,305)"/><rect x="674" y="306" width="38" height="24" fill="#5bd03c"/><g filter="url(#b2)"><path d="M687 317l4-2 2 2 4-3 1 4-3 3-4 2-3-2z" fill="#253a25"/></g><use href="#badge" transform="translate(706,321)"/><text class="l" x="693" y="339.500">绿幕液态金属</text>
<rect x="727" y="300" width="46" height="31" fill="#66756d" filter="url(#rock)"/>
<text class="l" x="750" y="339.500">微信图片</text><text class="l" x="750" y="347">_202211301739</text><text class="l" x="750" y="354.500">26</text>
<rect x="785" y="297" width="46" height="34" fill="#3f7388" filter="url(#wave)"/>
<text class="l" x="808" y="339.500">微信图片</text><text class="l" x="808" y="347">_202211301739</text><text class="l" x="808" y="354.500">38</text>
<rect x="841" y="306" width="49" height="27" fill="#2c2c2e"/><path d="M841 323h49M862 306v27M845 312h12" stroke="#4e4e50" stroke-width=".6" fill="none"/><use href="#c4d" transform="translate(884,327)"/><text class="l" x="866" y="339.500">小组 液态金属</text>
<rect x="899" y="304" width="49" height="29" fill="#4a4948"/><g filter="url(#b2)"><path d="M908 333q2-16 10-24 8-4 12 5 6 10 8 19z" fill="#a4735a"/></g><use href="#c4d" transform="translate(942,327)"/><text class="l" x="923" y="339.500">小组</text>
<rect x="956" y="305" width="49" height="28" fill="#aaaaaa"/><g filter="url(#b2)"><circle cx="981" cy="321" r="4" fill="#bfc8d0"/></g><use href="#c4d" transform="translate(999,327)"/><text class="l" x="981" y="339.500">旋转3(2)逆时针</text>

<!-- row 3 -->
<rect x="323" y="378" width="49" height="30" fill="#87cd8b"/><g filter="url(#b2)"><path d="M338 395l7-1 4-3 8-1-6 4 6 5-8-3-4 3-7-1z" fill="none" stroke="#857f7a" stroke-width=".8"/></g><use href="#c4d" transform="translate(366,402)"/><text class="l" x="347" y="414.500">旋转3逆时针</text>
<rect x="380" y="381" width="49" height="27" fill="#87cd8b"/><rect x="405" y="382" width="11" height="24" fill="#75bf7c"/><g filter="url(#b2)"><rect x="409" y="392" width="3.500" height="12" fill="#8a5a40"/><circle cx="410.500" cy="390" r="1.600" fill="#3a2a22"/></g><use href="#c4d" transform="translate(423,402)"/><text class="l" x="405" y="414.500">旋转3逆时针合成</text>
<use href="#film" transform="translate(438,384)"/><rect x="443" y="385" width="38" height="21.500" fill="#4a4745"/><g filter="url(#b2)"><path d="M458 390h6v6l-2 5h-3l-2-5z" fill="#1e1c1b"/></g><use href="#badge" transform="translate(475,396)"/><text class="l" x="462" y="414.500">液态环绕</text>
</g>

<rect x="232" y="605" width="780" height="1" fill="#8f93a0"/>
<!-- small overlay in black -->
<g filter="url(#b)"><rect x="238" y="610" width="14" height="14" fill="#0c0c0c"/><g fill="#aaa"><rect x="241" y="612.500" width="9" height=".8"/><rect x="239" y="612.500" width="1" height=".8"/><rect x="241" y="616.500" width="9" height=".8"/><rect x="239" y="616.500" width="1" height=".8"/><rect x="241" y="620.500" width="9" height=".8"/><rect x="239" y="620.500" width="1" height=".8"/></g></g>
<!-- share label -->
<rect x="235.500" y="712" width="9.500" height="8" rx="1" fill="#f2f2f2"/><path d="M238 718l2-2.500 1.500 0m-1.500-1.500h2v2" fill="none" stroke="#222" stroke-width=".8"/><rect x="237" y="721" width="6.500" height="1.100" fill="#f2f2f2"/>
<rect x="252" y="711" width="4.600" height="8" rx="2.300" fill="#f2f2f2"/><path d="M250.500 716.500a3.800 3.800 0 0 0 7.600 0M254.300 720.500v2" fill="none" stroke="#f2f2f2" stroke-width="1"/>
<text x="263" y="721" font-size="11" fill="#f2f2f2">胡美菁的屏幕共享</text>

<!-- right panel -->
<rect x="1012" y="23" width="265" height="704" fill="#fff"/>
<rect x="1012" y="23" width="1" height="704" fill="#eeeeee"/>
<rect x="1012" y="23" width="265" height=".8" fill="#eeeeee"/>
<rect x="1273.500" y="24" width="3.500" height="21" fill="#f5f5f5"/>
<circle cx="1024" cy="30.500" r="2.900" fill="#3e4250"/><path d="M1018.300 38.500q.5-5 5.700-5t5.700 5z" fill="#3e4250"/>
<text x="1032" y="37" font-size="9.800" fill="#444">成员 (24)</text>
<g fill="#555"><circle cx="1250.500" cy="33" r=".8"/><circle cx="1254" cy="33" r=".8"/><circle cx="1257.500" cy="33" r=".8"/></g>
<path d="M1262.500 29.500l7 7m0-7l-7 7" stroke="#555" stroke-width=".9"/>
<rect x="1022.500" y="52.500" width="262" height="19.500" rx="3" fill="#fff" stroke="#dcdcdc"/>
<circle cx="1031.500" cy="61" r="3" fill="none" stroke="#666" stroke-width="1"/><path d="M1033.700 63.200l1.800 1.800" stroke="#666" stroke-width="1"/>
<text x="1040" y="65.500" font-size="9.300" fill="#b3b3b3">搜索成员</text>
<rect x="1012" y="78.500" width="265" height=".7" fill="#f0f0f0"/>

<!-- avatars -->
<g filter="url(#b2)">
<g transform="translate(1033,96)" clip-path="url(#av)"><circle r="12" fill="#5a6746" filter="url(#rock)"/></g>
<g transform="translate(1033,129.500)" clip-path="url(#av)"><circle r="12" fill="#f0dff0"/><ellipse cy="-1" rx="8" ry="8" fill="#f7d3c8"/><circle cx="-6.500" cy="-7" r="2.500" fill="#f2b9ad"/><circle cx="6.500" cy="-7" r="2.500" fill="#f2b9ad"/><circle cx="-5" cy="0" r="1.800" fill="#f2a6a0"/><circle cx="5" cy="0" r="1.800" fill="#f2a6a0"/><ellipse cy="3" rx="5" ry="3" fill="#a8c4e0"/></g>
<g transform="translate(1033,163)" clip-path="url(#av)"><circle r="12" fill="#c29431"/><circle cx="-1" cy="-1" r="5" fill="#4a3a22"/><path d="M-9 8l2-12 3 6 5 1 7 7v4H-9z" fill="#3a2c18"/></g>
<g transform="translate(1033,197)" clip-path="url(#av)"><circle r="12" fill="#faf6f0"/><path d="M-5-11l3 4 3-4 2 5-8 1z" fill="#e8823a"/><path d="M-7 10q-2-12 6-15 8 0 8 10l-3 6-2-8-5-1-1 8z" fill="#222"/><ellipse cx="0" cy="0" rx="3.500" ry="4" fill="#f0d8cc"/></g>
<g transform="translate(1033,230.500)" clip-path="url(#av)"><circle r="12" fill="#c8a882"/><ellipse cy="-1" rx="7" ry="7" fill="#e6c4a8"/><path d="M-10-2q4-9 14-8 7 3 7 8-6-4-12-3-6 0-9 3z" fill="#5c4a3a"/><path d="M-6 12l2-5h8l3 5z" fill="#222"/></g>
<g transform="translate(1033,264)" clip-path="url(#av)"><circle r="12" fill="#8c8780"/><ellipse cy="1" rx="6" ry="8" fill="#bdb2a4"/><path d="M-3 4h6" stroke="#5a2a2a" stroke-width="1"/></g>
<g transform="translate(1033,298)" clip-path="url(#av)"><circle r="12" fill="#f4f2f2"/><ellipse cy="1" rx="6" ry="6.500" fill="#f6e4dc"/><circle cx="-2.500" cy="0" r="1" fill="#c03030"/><circle cx="3" cy="0" r="1" fill="#c03030"/><path d="M-9 8q-2-14 6-17M9 8q2-14-6-17" stroke="#c8c8cc" stroke-width="2" fill="none"/></g>
<g transform="translate(1033,331)" clip-path="url(#av)"><circle r="12" fill="#5a5a5c"/><ellipse cy="-4" rx="8" ry="4" fill="#8a8a8a"/><rect x="-8" y="-2" width="16" height="3" fill="#a09080"/><ellipse cy="7" rx="9" ry="5" fill="#444"/></g>
<g transform="translate(1033,365)" clip-path="url(#av)"><circle r="12" fill="#ecc8a8"/><circle cy="-1" r="2.400" fill="#f8f4f0"/><circle cy="-.500" r="1" fill="#222"/></g>
<g transform="translate(1033,399)" clip-path="url(#av)"><circle r="12" fill="#d8d2c4"/><path d="M-5 9q-3-14 5-15 8 1 5 15z" fill="#8a2a20"/><circle cy="-2" r="2.500" fill="#2a1a14"/><rect x="-12" y="-12" width="3" height="24" fill="#666"/><rect x="9" y="-12" width="3" height="24" fill="#666"/></g>
<g transform="translate(1033,432)" clip-path="url(#av)"><circle r="12" fill="#f8f2e2"/><ellipse cy="-1" rx="7" ry="6" fill="#fff" stroke="#e8dcc0"/><path d="M-10 7q5 4 14 3" stroke="#e8c850" stroke-width="2" fill="none"/></g>
<g transform="translate(1033,466)" clip-path="url(#av)"><circle r="12" fill="#f8f8f8"/><ellipse cy="0" rx="4.500" ry="5" fill="#f3ddd4"/><path d="M-8 4q-1-13 8-12 9 0 7 10l-2-5q-5 0-7-3-2 4-4 4z" fill="#3a3230"/></g>
<g transform="translate(1033,499.500)" clip-path="url(#av)"><circle r="12" fill="#3e2a22"/><ellipse cy="0" rx="6.500" ry="7.500" fill="#eac4ac"/><path d="M-2.500 4h5" stroke="#b8382f" stroke-width="1.400"/><path d="M-4-1h2m4 0h2" stroke="#3a2a22" stroke-width="1"/><path d="M-8-1q1-8 8-8 7 0 8 8-7-5-16 0z" fill="#3e2a22"/></g>
<g transform="translate(1033,533)" clip-path="url(#av)"><circle r="12" fill="#181412"/><ellipse cy="-1" rx="4" ry="5.500" fill="#e8c8b8"/><path d="M-3 12l3-7 3 7z" fill="#f0f0f0"/></g>
<g transform="translate(1033,566.500)" clip-path="url(#av)"><circle r="12" fill="#ead5ab"/><ellipse cy="2" rx="8" ry="7" fill="#f4ebd4"/><circle cx="-3" cy="-2" r="1.400" fill="#1f3d20"/><circle cx="3" cy="-2" r="1.400" fill="#1f3d20"/><circle cy="1" r="1" fill="#222"/><circle cx="-10" cy="4" r="3.500" fill="#d9a464"/><circle cx="10" cy="4" r="3.500" fill="#d9a464"/></g>
<g transform="translate(1033,600)" clip-path="url(#av)"><circle r="12" fill="#35353b"/><ellipse cx="1" cy="-1" rx="5" ry="6" fill="#7b5a46"/><path d="M-4-6q5-4 10 0" stroke="#1e1e22" stroke-width="2" fill="none"/></g>
<g transform="translate(1033,633.500)" clip-path="url(#av)"><circle r="12" fill="#a69c84"/><ellipse cy="0" rx="7" ry="5" fill="#ece8e0"/><circle cx="3" cy="0" r="1.800" fill="#c8644a"/><circle cx="-3" cy="-2" r="1.200" fill="#c8644a"/></g>
<g transform="translate(1033,667)" clip-path="url(#av)"><circle r="12" fill="#f0ece6"/><path d="M-12-12h9v12l-9 4zM12-12h-9v12l9 4z" fill="#a5632c"/><ellipse cy="3" rx="6.500" ry="6.500" fill="#f7f3ee"/><ellipse cy="2" rx="4.500" ry="3.600" fill="#131313"/></g>
</g>

<!-- names -->
<g filter="url(#b)">
<text class="n" x="1051" y="93.500">邓 Dekuan</text><text class="n" x="1051" y="106.500" fill="#6b6e7c">(我)</text>
<text class="n" x="1051" y="127">尚德洋</text><text class="n" x="1051" y="139.500">(主持人)</text>
<text class="n" x="1051" y="167">胡美菁</text>
<text class="n" x="1051" y="201">20 戏剧班朱亚美</text>
<text class="n" x="1051" y="234">20 戏剧魏思彤</text>
<text class="n" x="1051" y="267.500">曹瑞清</text>
<text class="n" x="1051" y="301.500">巩珈颐</text>
<text class="n" x="1051" y="335">柯嘉烨</text>
<text class="n" x="1051" y="368.500">林晓冰</text>
<text class="n" x="1051" y="402.500">刘卫东</text>
<text class="n" x="1051" y="436">刘子怡</text>
<text class="n" x="1051" y="469.500">钱柯辰</text>
<text class="n" x="1051" y="503">王梦溪</text>
<text class="n" x="1051" y="536.500">王雅琪</text>
<text class="n" x="1051" y="570">吴彬茹</text>
<text class="n" x="1051" y="603.500">戏剧影视李傲翔</text>
<text class="n" x="1051" y="637">肖霄越</text>
<text class="n" x="1051" y="670.500">邢哲戏剧</text>
<use href="#mic" transform="translate(1255.500,96)"/>
<use href="#mm" transform="translate(1255.500,129.500)"/>
<use href="#mic" transform="translate(1255.500,163)"/>
<use href="#mm" transform="translate(1255.500,197)"/>
<use href="#mm" transform="translate(1255.500,230.500)"/>
<use href="#mm" transform="translate(1255.500,264)"/>
<use href="#mm" transform="translate(1255.500,298)"/>
<use href="#mm" transform="translate(1255.500,331)"/>
<use href="#mm" transform="translate(1255.500,365)"/>
<use href="#mm" transform="translate(1255.500,399)"/>
<use href="#mm" transform="translate(1255.500,432)"/>
<use href="#mm" transform="translate(1255.500,466)"/>
<use href="#mm" transform="translate(1255.500,499.500)"/>
<use href="#mm" transform="translate(1255.500,533)"/>
<use href="#mm" transform="translate(1255.500,566.500)"/>
<use href="#mm" transform="translate(1255.500,600)"/>
<use href="#mm" transform="translate(1255.500,633.500)"/>
<use href="#mm" transform="translate(1255.500,667)"/>
<use href="#vv" transform="translate(1272.500,96)"/><use href="#vv" transform="translate(1272.500,129.500)"/><use href="#vv" transform="translate(1272.500,163)"/><use href="#vv" transform="translate(1272.500,197)"/><use href="#vv" transform="translate(1272.500,230.500)"/><use href="#vv" transform="translate(1272.500,264)"/><use href="#vv" transform="translate(1272.500,298)"/><use href="#vv" transform="translate(1272.500,331)"/><use href="#vv" transform="translate(1272.500,365)"/><use href="#vv" transform="translate(1272.500,399)"/><use href="#vv" transform="translate(1272.500,432)"/><use href="#vv" transform="translate(1272.500,466)"/><use href="#vv" transform="translate(1272.500,499.500)"/><use href="#vv" transform="translate(1272.500,533)"/><use href="#vv" transform="translate(1272.500,566.500)"/><use href="#vv" transform="translate(1272.500,600)"/><use href="#vv" transform="translate(1272.500,633.500)"/><use href="#vv" transform="translate(1272.500,667)"/>
<rect x="1231" y="157" width="13" height="9" rx="1" fill="#a0a3aa"/><path d="M1234.500 164l2.500-2.500h1.500m-1.500-1.500h2v2" fill="none" stroke="#fff" stroke-width=".7"/><rect x="1233" y="167.500" width="9" height="1" fill="#a0a3aa"/>
</g>
<!-- toast -->
<rect x="1097" y="198" width="190" height="27" rx="3" fill="#3a3c42"/>
<use href="#mic" transform="translate(1110,211.500) scale(.95)"/>
<rect x="1122" y="201" width=".8" height="21" fill="#2b2d32"/>
<text x="1133" y="215" font-size="9" fill="#eaeaea">正在讲话:</text>
<g filter="url(#b2)"><path d="M1241 212l8-8.500 8 8.500-8 8.500z" fill="#505258"/><path d="M1252 212l8-8.500 8 8.500-8 8.500z" fill="#585a60"/><path d="M1263 212l8-8.500 8 8.500-8 8.500z" fill="#505258"/></g>
<!-- footer -->
<rect x="1012" y="687" width="265" height=".8" fill="#ececec"/>
<rect x="1099.500" y="698" width="51" height="18" rx="2.500" fill="#fff" stroke="#cfcfcf" stroke-width=".8"/>
<rect x="1157.500" y="698" width="51" height="18" rx="2.500" fill="#fff" stroke="#cfcfcf" stroke-width=".8"/>
<text x="1125" y="710" text-anchor="middle" font-size="9.300" fill="#333">静音</text>
<text x="1183" y="710" text-anchor="middle" font-size="9.300" fill="#333">改名</text>

<!-- DOCK -->
<rect x="16" y="742.500" width="1237" height="36.500" rx="8" fill="#6d94d2"/>
<g filter="url(#b)">
<g transform="translate(33,760)"><rect x="-11.500" y="-12" width="23" height="24" rx="5" fill="url(#finder)"/><path d="M0-12q-3 10-2 15h2" stroke="#123" stroke-width=".8" fill="none"/><path d="M-6-3v3M6-3v3M-6 6q6 3 12 0" stroke="#123" stroke-width=".9" fill="none"/></g>
<g transform="translate(62,760)"><rect x="-11.500" y="-12" width="23" height="24" rx="5" fill="#85888c"/><circle r="8.500" fill="#55585c" stroke="#3c3f42"/><circle r="4.500" fill="none" stroke="#9a9da0" stroke-width="1.300"/><path d="M-8 0H8M0-8V8" stroke="#9a9da0" stroke-width=".8"/></g>
<circle cx="72" cy="751" r="5" fill="#e64a3c"/><text x="72" y="753.500" text-anchor="middle" font-size="6.500" fill="#fff">1</text>
<g transform="translate(92,760)"><rect x="-11.500" y="-12" width="23" height="24" rx="5" fill="#f8f8f8"/><path d="M0 0L-7.800-4.500A9 9 0 0 1 7.800-4.500z" fill="#e0433a"/><path d="M0 0L7.800-4.500A9 9 0 0 1 0 9z" fill="#f6c02c"/><path d="M0 0L0 9A9 9 0 0 1-7.800-4.500z" fill="#2fa14f"/><circle r="4.500" fill="#fff"/><circle r="3.400" fill="#3a7ee8"/></g>
<g transform="translate(121,760)"><rect x="-11.500" y="-12" width="23" height="24" rx="5" fill="#f4f4f4"/><circle r="9.500" fill="#2f8fe8"/><path d="M5-6L1.500 1.500-5 6-1.500-1.500z" fill="#fff"/><path d="M5-6L1.500 1.500-1.500-1.500z" fill="#e8503f"/></g>
<g transform="translate(151,760)"><rect x="-11.500" y="-12" width="23" height="24" rx="5" fill="#e32f2f"/><text y="3.500" text-anchor="middle" font-size="9" fill="#fff">有道</text></g>
<g transform="translate(180,760)"><rect x="-11.500" y="-12" width="23" height="24" rx="5" fill="#e1282e"/><path d="M3-7.500a7.500 7.500 0 1 0 4.500 3M1-4a4.500 4.500 0 1 0 3 3.500l-1.500-5" fill="none" stroke="#fff" stroke-width="1.400"/></g>
<g transform="translate(209,760)"><rect x="-11.500" y="-12" width="23" height="24" rx="5" fill="#ccd3e2"/><g><rect x="-7.500" y="-8" width="4" height="4" rx="1" fill="#f2a13a"/><rect x="-2" y="-8" width="4" height="4" rx="1" fill="#f2c13a"/><rect x="3.500" y="-8" width="4" height="4" rx="1" fill="#9bce4e"/><rect x="-7.500" y="-2" width="4" height="4" rx="1" fill="#e64a4a"/><rect x="-2" y="-2" width="4" height="4" rx="1" fill="#e66a4a"/><rect x="3.500" y="-2" width="4" height="4" rx="1" fill="#4ab0e6"/><rect x="-7.500" y="4" width="4" height="4" rx="1" fill="#4a80e6"/><rect x="-2" y="4" width="4" height="4" rx="1" fill="#7a5ae6"/><rect x="3.500" y="4" width="4" height="4" rx="1" fill="#4ac6a6"/></g></g>
<g transform="translate(239,760)"><rect x="-11.500" y="-12" width="23" height="24" rx="5" fill="#f9f9ef"/><circle r="8.500" fill="#f3df3c"/><circle cx="-1.800" cy="3.500" r="2.800" fill="#1db15c"/><path d="M1-7v10M1-7q3 3 5 3" stroke="#1db15c" stroke-width="1.500" fill="none"/></g>
<g transform="translate(268.500,760)"><rect x="-11.500" y="-12" width="23" height="24" rx="5" fill="#f2552a"/><path d="M-6-4v8M-3-7v14M2-5a4 5 0 0 0 0 10M5-4l4 4-4 4" fill="none" stroke="#fff" stroke-width="1.300"/></g>
<g transform="translate(297.500,760)"><rect x="-11" y="-5" width="22" height="17" rx="3" fill="url(#rain)"/><rect x="-11" y="-7" width="22" height="4" fill="#222"/><rect x="-10" y="-13" width="21" height="5" fill="#3a3a3a" transform="rotate(-7)"/><path d="M-7-13l-3 5M-1-14l-3 5M5-15l-3 5M-8-7l-2 4M-2-7l-2 4M4-7l-2 4" stroke="#eee" stroke-width="1.100"/></g>
<g transform="translate(327,760)"><rect x="-11.500" y="-12" width="23" height="24" rx="5" fill="#243344" stroke="#7a8a9a" stroke-width=".6"/><circle cy="-4" r="3.300" fill="#e89a2c"/><circle cx="-3.800" cy="2.800" r="3.300" fill="#e04848"/><circle cx="3.800" cy="2.800" r="3.300" fill="#56b6e0"/></g>
<g transform="translate(357,760)"><rect x="-12.500" y="-12.500" width="25" height="25" fill="#1e0a3c" stroke="#a08ad8" stroke-width="1"/><text y="5.500" text-anchor="middle" font-size="15" fill="#c6b4f4">Ae</text></g>
<g transform="translate(386.500,760)"><path d="M-13 0L-6-7 5-13 10-9 13 0 10 9 5 13-6 7z" fill="#0c0c0c"/><path d="M-9 0H1M1 0L6-9M1 0L6 9" fill="none" stroke="#fff" stroke-width="2.600"/></g>
<g transform="translate(416,760)"><circle r="12.500" fill="#e8eef8"/><circle cx="1" cy="0" r="10.500" fill="#14204c"/><circle cx="2" cy="1" r="6" fill="#3250b8"/><path d="M-10-3A10 10 0 0 1 6-10" stroke="#fff" stroke-width="1.200" fill="none"/></g>
<g transform="translate(445,760)"><rect x="-12.500" y="-12.500" width="25" height="25" rx="2.500" fill="#0b2730" stroke="#31c5f0" stroke-width="1"/><text y="5.500" text-anchor="middle" font-size="15" fill="#45c8f0">Ps</text></g>
<g transform="translate(475,760)"><rect x="-12.500" y="-12" width="25" height="24" fill="#3c3c48"/><text y="3.500" text-anchor="middle" font-size="9.500" fill="#e0e0e0">Live</text></g>
<g transform="translate(504.500,760)"><circle r="13" fill="#1e88e2"/><path d="M6-5a8 8 0 1 0 0 10" fill="none" stroke="#fff" stroke-width="3.500"/><rect x="1" y="-14" width="13" height="6" rx="1" fill="#f39a3c"/><text x="7.500" y="-9.500" text-anchor="middle" font-size="4.500" fill="#fff">LITE</text></g>
<g transform="translate(533.500,760)"><rect x="-11.500" y="-12" width="23" height="24" rx="5" fill="#f09a32"/><path d="M-6 8L6-8" stroke="#fff" stroke-width="1.400"/></g>
<g transform="translate(563,760)"><rect x="-11.500" y="-12" width="23" height="24" rx="5" fill="#2f82ea"/><rect x="-7" y="-7" width="14" height="7" fill="#fff"/><path d="M-2-9h4v2h-4z" fill="#f2a13a"/><path d="M-4 3h8M-1 0h2v8h-2zM-4 9h8" stroke="#fff" stroke-width="1" fill="#fff"/></g>
<g transform="translate(592,760)"><rect x="-11.500" y="-12" width="23" height="24" rx="5" fill="#f7f7f7"/><circle cx="0" cy="-3.500" r="3.800" fill="none" stroke="#2f7fe8" stroke-width="2"/><circle cx="-3.500" cy="3" r="3.800" fill="none" stroke="#2f7fe8" stroke-width="2"/><circle cx="3.500" cy="3" r="3.800" fill="none" stroke="#e0433a" stroke-width="2"/></g>
<g transform="translate(622,760)"><rect x="-11.500" y="-12" width="23" height="24" rx="5" fill="#6ac95c"/><rect x="-7" y="1" width="2.800" height="7" fill="#fff"/><rect x="-2.500" y="-3" width="2.800" height="11" fill="#fff"/><rect x="2" y="-7" width="2.800" height="15" fill="#fff"/></g>
<g transform="translate(651,760)"><rect x="-13" y="-13" width="26" height="26" rx="3" fill="#1d4c72"/><path d="M0-9L-10 0h3v8h14V0h3z" fill="#fff"/><path d="M4 0a4 4 0 1 0 0 3h-3" fill="none" stroke="#1d4c72" stroke-width="1.300"/></g>
<g transform="translate(680,760)"><rect x="-11.500" y="-12" width="23" height="24" rx="5" fill="#5ed36c"/><ellipse cx="-2" cy="-2" rx="6.500" ry="5.500" fill="#fff"/><ellipse cx="3.500" cy="3" rx="5.500" ry="4.500" fill="#fff" stroke="#5ed36c" stroke-width=".6"/></g>
<g transform="translate(710.500,760)"><ellipse cy="-1" rx="8" ry="12" fill="#111"/><ellipse cy="3" rx="6" ry="8" fill="#fff"/><path d="M-7-2q7 4 14 0v2q-7 3-14 0z" fill="#e0342a"/><path d="M3 0l3 6h-3z" fill="#e0342a"/><ellipse cx="-4" cy="11" rx="4" ry="1.800" fill="#eea82c"/><ellipse cx="4" cy="11" rx="4" ry="1.800" fill="#eea82c"/><ellipse cy="-5" rx="2.500" ry="1.300" fill="#eea82c"/></g>
<g transform="translate(740,760)"><rect x="-11.500" y="-12" width="23" height="24" rx="5" fill="#9c52d8"/><circle cy="-2" r="8" fill="none" stroke="#fff" stroke-width="1"/><circle cy="-2" r="5" fill="none" stroke="#fff" stroke-width="1"/><circle cy="-2" r="2" fill="#fff"/><rect x="-1.300" y="1" width="2.600" height="8" rx="1.300" fill="#fff"/></g>
<g transform="translate(769.500,760)"><path d="M-8-6q8-5 16 0 2 8-8 17Q-10 2-8-6z" fill="#a82a32"/><g fill="#2a0f12"><circle cx="-3" cy="-2" r="1"/><circle cx="3" cy="-2" r="1"/><circle cy="2" r="1"/><circle cx="-3" cy="5" r=".9"/><circle cx="3" cy="5" r=".9"/></g><path d="M-6-8l4 0 2-3 2 3 4 0-3 3H-3z" fill="#3a6a2a"/></g>
<rect x="790" y="747" width=".8" height="26" fill="#44638f"/>
<g transform="translate(812,760)"><rect x="-11.500" y="-12" width="23" height="24" rx="5" fill="#2d8bf0"/><path d="M-7-5L1 1l6-7-3 13-4-4-5 4 3-6z" fill="#e8f2ff"/></g>
<g transform="translate(841.500,760)"><circle r="12.500" fill="#60d066"/><path d="M-7-3.500q8-2 15 1.500M-6 1q7-1.500 12 1.500M-5 5q6-1 10 1" fill="none" stroke="#111" stroke-width="1.700"/></g>
<g transform="translate(871,760)"><path d="M-12-14h24v21L0 13-12 7z" fill="#0d0d0d"/><text y="0" text-anchor="middle" font-size="10" fill="#fff" textLength="16" lengthAdjust="spacingAndGlyphs">EPIC</text><text y="6" text-anchor="middle" font-size="3.800" fill="#fff">GAMES</text></g>
<g transform="translate(900,760)"><rect x="-11.500" y="-12" width="23" height="24" rx="5" fill="#1e80f4"/><path d="M-8 4l4-6 3 3 3-5 6 8h-5l-2-2-3 2z" fill="#fff"/></g>
<g transform="translate(929.500,760)"><rect x="-11.500" y="-12" width="23" height="24" rx="5" fill="#2b3040"/><path d="M-1-6L8 0-1 6z" fill="#2b9ae8"/><path d="M-5-2v4M-3-4v8" stroke="#3a7fe8" stroke-width="1.300"/></g>
<g transform="translate(959,760)"><rect x="-3" y="-9" width="16" height="18" fill="#f2f2f2"/><path d="M0-5h11M0-1h11M0 3h11" stroke="#888" stroke-width=".7"/><path d="M-12-9L3-13V12l-15-4z" fill="#3a66a8"/><text x="-4.500" y="4" text-anchor="middle" font-size="10" fill="#fff">W</text></g>
<g transform="translate(988.500,760)"><rect x="-3" y="-9" width="16" height="18" fill="#f2f2f2"/><path d="M0-5h11M0-1h11M0 3h11M5-9v18" stroke="#4a9a5a" stroke-width=".7"/><path d="M-12-9L3-13V12l-15-4z" fill="#2f7d4c"/><text x="-4.500" y="4" text-anchor="middle" font-size="10" fill="#fff">X</text></g>
<rect x="1010" y="747" width=".8" height="26" fill="#44638f"/>
<g transform="translate(1031,760)"><rect x="-9" y="-12.500" width="18" height="25" fill="#131313"/><rect x="0" y="-11" width="8" height="6" fill="#f0f0f0"/><text x="-1" y="-1" text-anchor="middle" font-size="4" fill="#d8d8d8">不管</text><path d="M-7 2l5 8M7 2l-5 8" stroke="#b04040" stroke-width="1"/></g>
<g transform="translate(1061,760)"><rect x="-13" y="-8" width="26" height="16" fill="#26201c"/><rect x="-9" y="-4" width="8" height="9" fill="#5c3020"/><rect x="2" y="-4" width="8" height="9" fill="#333"/><rect x="5" y="1" width="9" height="9" rx="2" fill="#2b3040"/><path d="M8 3l4 2.500L8 8z" fill="#2b9ae8"/></g>
<g transform="translate(1090,760)"><rect x="-13" y="-10" width="26" height="20" fill="#f2f4f8"/><rect x="-13" y="-10" width="26" height="2" fill="#4d7fc8"/><path d="M-10-5h5m-5 3h5m-5 3h5m-5 3h5M-2-5h11m-11 3h11m-11 3h11" stroke="#a8acb6" stroke-width=".7"/><circle cx="8" cy="8" r="4" fill="#f4f4f4"/><circle cx="8" cy="8" r="3" fill="#e0433a"/><circle cx="8" cy="8" r="1.500" fill="#3a7ee8"/></g>
<g transform="translate(1120,760)"><rect x="-13" y="-10" width="26" height="20" fill="#f7f8fa"/><rect x="-13" y="-10" width="26" height="1.500" fill="#4d7fc8"/><rect x="-9" y="-5" width="8" height="6" fill="none" stroke="#bbb" stroke-width=".6"/><rect x="2" y="-5" width="8" height="6" fill="none" stroke="#bbb" stroke-width=".6"/><rect x="4" y="2" width="8" height="9" rx="1.500" fill="#3a66a8"/></g>
<g transform="translate(1149,760)"><rect x="-13" y="-12.500" width="26" height="25" fill="#f9f9f9"/><path d="M-10-9h13m-13 3h20m-20 3h20m-20 3h20m-20 3h20m-20 3h12" stroke="#888" stroke-width=".7"/><rect x="3" y="3" width="9" height="9" rx="1.500" fill="#f09a32"/><path d="M5 10l5-5" stroke="#fff" stroke-width=".8"/></g>
<g transform="translate(1179,760)"><rect x="-9" y="-13" width="18" height="26" fill="#f7f8fa"/><g fill="#9fb4cf"><circle cx="-5" cy="-9" r="1.300"/><circle cx="-5" cy="-4" r="1.300"/><circle cx="-5" cy="1" r="1.300"/><circle cx="-5" cy="6" r="1.300"/></g><path d="M-2-9h7m-7 5h7m-7 5h7" stroke="#bbb" stroke-width=".7"/><rect x="1" y="2" width="10" height="10" rx="2" fill="#1e80f4"/><path d="M2.500 9l2.500-3 1.500 1.500L8 5l2 4z" fill="#fff"/></g>
<g transform="translate(1208.500,760)"><rect x="-13" y="-9" width="26" height="18" fill="#f2f2f2"/><rect x="-11" y="-6" width="20" height="12" fill="#2a3040"/><path d="M-9-3h9m-9 3h12m-12 3h6" stroke="#a8e0ff" stroke-width=".6"/><rect x="4" y="2" width="8" height="9" rx="1.500" fill="#2d8bf0"/></g>
<g transform="translate(1237,760)"><path d="M-9-8h18l-2 20q-7 2-14 0z" fill="url(#trash)"/><ellipse cy="-8" rx="9" ry="3.500" fill="#e8eaee"/><path d="M-5-8l3-2 2 2 3-2 2 2" stroke="#777" stroke-width="1" fill="none"/><path d="M-4-3l1 13M0-3v14M4-3l-1 13" stroke="#fff" stroke-width=".6" opacity=".7"/></g>
</g>
<g fill="#18294a"><circle cx="33" cy="776" r="1.100"/><circle cx="92" cy="776" r="1.100"/><circle cx="151" cy="776" r="1.100"/><circle cx="533.500" cy="776" r="1.100"/><circle cx="563" cy="776" r="1.100"/><circle cx="592" cy="776" r="1.100"/><circle cx="680" cy="776" r="1.100"/><circle cx="812" cy="776" r="1.100"/><circle cx="841.500" cy="776" r="1.100"/><circle cx="871" cy="776" r="1.100"/><circle cx="900" cy="776" r="1.100"/><circle cx="929.500" cy="776" r="1.100"/><circle cx="959" cy="776" r="1.100"/><circle cx="988.500" cy="776" r="1.100"/></g>
</svg>
</body></html>
